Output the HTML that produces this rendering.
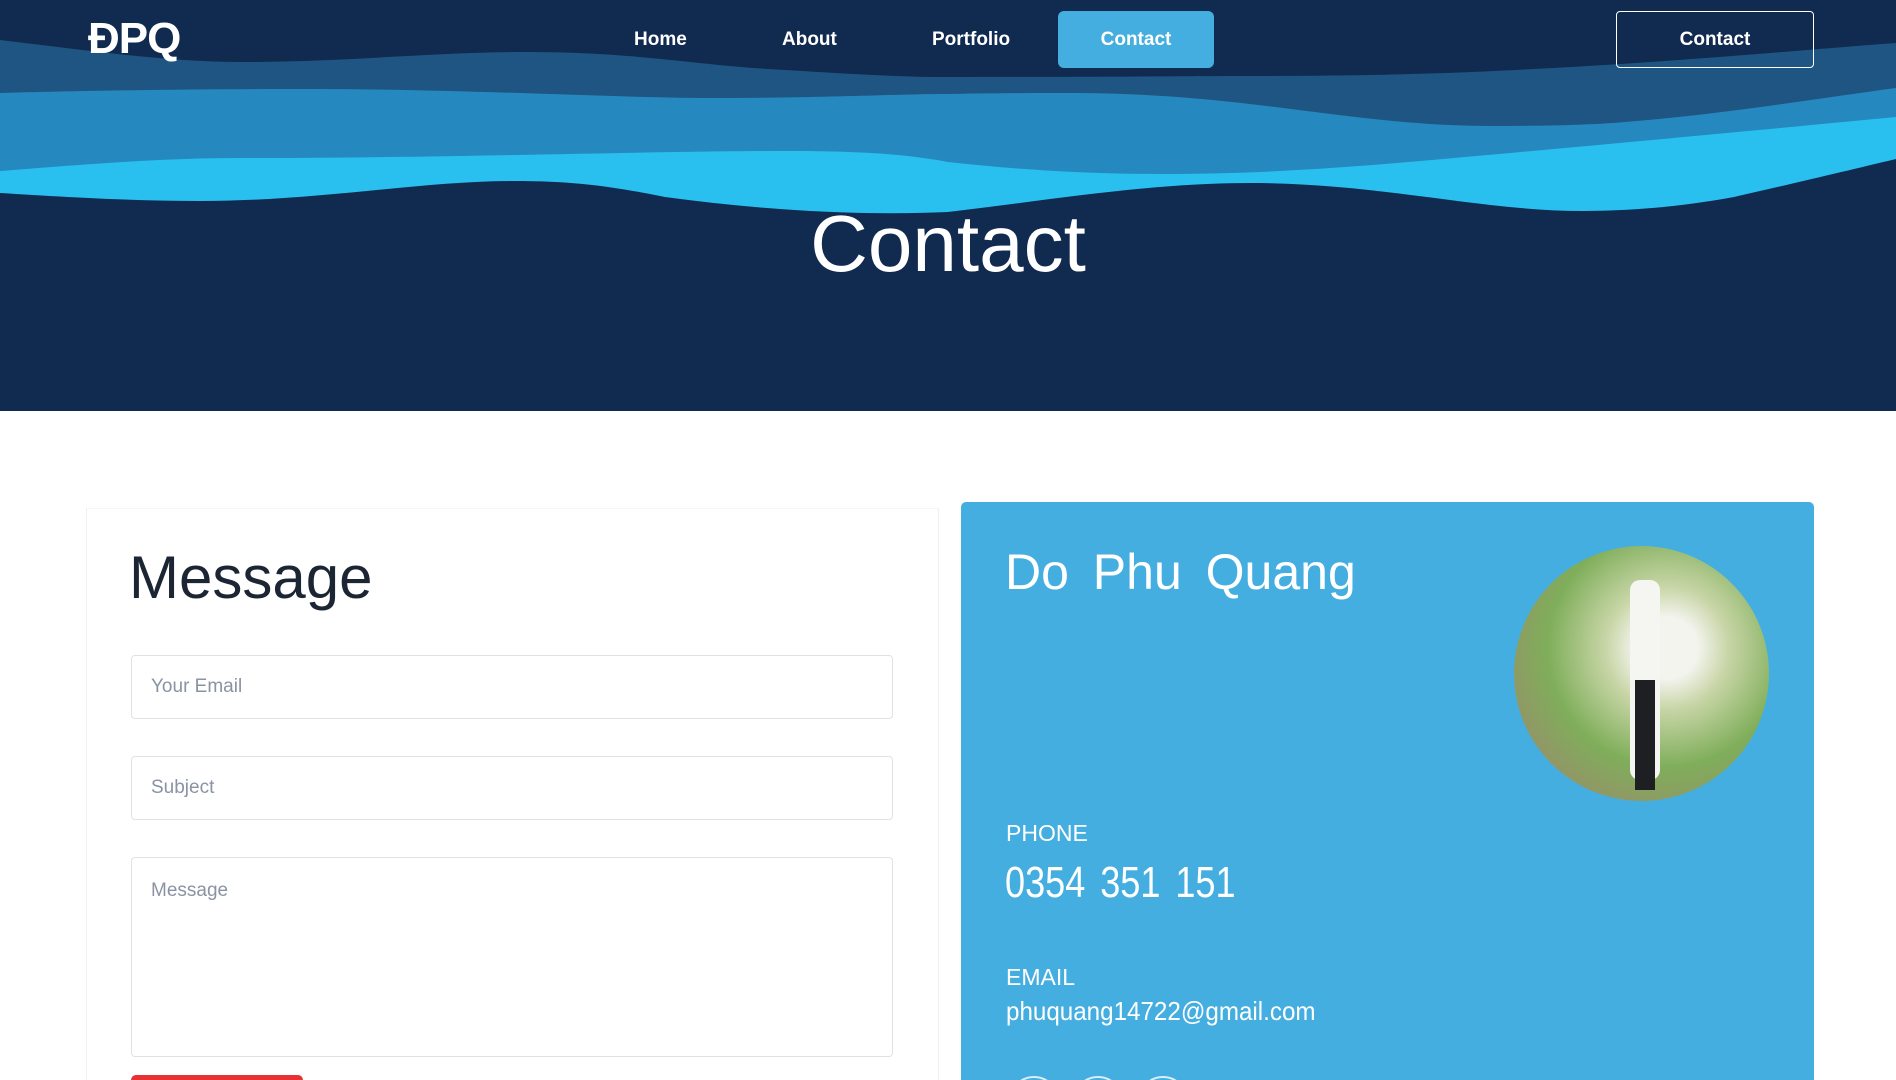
<!DOCTYPE html>
<html style="width:1896px;height:1080px;overflow:hidden"><head><meta charset="utf-8"><style>
*{margin:0;padding:0;box-sizing:border-box}
body{width:1896px;height:1080px;overflow:hidden;background:#fff;font-family:"Liberation Sans",sans-serif}
#wrap{position:relative;width:1896px;height:1080px;overflow:hidden}
.hero{position:absolute;left:0;top:0;width:1896px;height:411px;background:#112a4f;overflow:hidden}
.abs{position:absolute}
.nav{color:#fff;font-size:19px;font-weight:bold}
.input{position:absolute;left:131px;width:762px;border:1px solid #dfe2e6;border-radius:4px;color:#8a93a3;font-size:19px;padding-left:19px}
.circ{position:absolute;top:574px;width:50px;height:50px;border:2px solid #fff;border-radius:50%;opacity:.8}
</style></head><body><div id="wrap">
<div class="hero">
<svg class="abs" style="left:0;top:0" width="1896" height="411" viewBox="0 0 1896 411">
<path fill="#1f5583" d="M0,40 C100,52 170,62 242,62 C350,62 430,52 526,52 C640,52 700,66 786,70 C850,74 900,77 948,77 C1100,77 1200,76 1250,76 C1400,76 1480,72 1553,68 C1700,60 1800,50 1896,43 L1896,411 L0,411Z"/>
<path fill="#2589bf" d="M0,93 C120,90 200,89 302,89 C480,89 600,98 725,98 C820,98 900,94 948,94 C1000,93 1030,93 1069,93 C1250,93 1350,126 1492,126 C1550,126 1580,125 1613,123 C1720,115 1820,98 1896,88 L1896,411 L0,411Z"/>
<path fill="#29c0f0" d="M0,171 C100,163 170,158 242,158 C450,158 650,151 786,151 C870,151 910,155 948,162 C1020,170 1090,174 1160,174 C1260,174 1340,168 1432,160 C1600,145 1760,130 1896,117 L1896,411 L0,411Z"/>
<path fill="#112a4f" d="M0,193 C80,198 140,201 200,201 C320,201 420,181 514,181 C580,181 620,188 665,197 C760,210 860,216 948,212 C1050,200 1150,183 1250,183 C1380,183 1480,211 1583,211 C1640,211 1690,205 1734,197 C1800,182 1850,170 1896,159 L1896,411 L0,411Z"/>
</svg>
<div class="abs" style="left:88px;top:14px;color:#fff;font-size:44px;font-weight:bold;letter-spacing:-1px">ĐPQ</div>
<div class="abs nav" style="left:634px;top:29px">Home</div>
<div class="abs nav" style="left:782px;top:29px">About</div>
<div class="abs nav" style="left:932px;top:29px">Portfolio</div>
<div class="abs nav" style="left:1058px;top:11px;width:156px;height:57px;background:#45aee0;border-radius:6px;text-align:center;line-height:57px">Contact</div>
<div class="abs nav" style="left:1616px;top:11px;width:198px;height:57px;border:1px solid #fff;border-radius:4px;text-align:center;line-height:55px">Contact</div>
<div class="abs" style="left:0;width:1896px;top:199px;text-align:center;color:#fff;font-size:80px;line-height:90px">Contact</div>
</div>

<div class="abs" style="left:86px;top:508px;width:853px;height:572px;border-left:1px solid #f0f0f0;border-right:1px solid #f0f0f0;border-top:1px solid #f6f6f6"></div>
<div class="abs" style="left:129px;top:538px;font-size:60px;color:#1c2533;line-height:80px">Message</div>
<div class="input" style="top:655px;height:64px;line-height:62px">Your Email</div>
<div class="input" style="top:756px;height:64px;line-height:62px">Subject</div>
<div class="input" style="top:857px;height:200px;padding-top:22px">Message</div>
<div class="abs" style="left:131px;top:1075px;width:172px;height:5px;background:#e63232;border-radius:5px 5px 0 0"></div>

<div class="abs" style="left:961px;top:502px;width:853px;height:578px;background:#45aee0;border-radius:5px 5px 0 0;overflow:hidden">
<div class="circ" style="left:48px"></div>
<div class="circ" style="left:112px"></div>
<div class="circ" style="left:177px"></div>
</div>
<div class="abs" style="left:1005px;top:540px;color:#fff;font-size:50px;line-height:64px;word-spacing:10px">Do Phu Quang</div>
<div class="abs" style="left:1514px;top:546px;width:255px;height:255px;border-radius:50%;background:radial-gradient(ellipse at 60% 40%,#f4f4ef 0 14%,#c9d6a8 28%,#7fae5a 55%,#9a8c6c 85%)"></div>
<div class="abs" style="left:1630px;top:580px;width:30px;height:200px;background:#f5f5f2;border-radius:10px"></div>
<div class="abs" style="left:1635px;top:680px;width:20px;height:110px;background:#1d1f22"></div>
<div class="abs" style="left:1006px;top:820px;color:#fff;font-size:23px">PHONE</div>
<div class="abs" style="left:1005px;top:858px;color:#fff;font-size:44px;word-spacing:6px;transform:scaleX(0.82);transform-origin:left top">0354 351 151</div>
<div class="abs" style="left:1006px;top:964px;color:#fff;font-size:23px">EMAIL</div>
<div class="abs" style="left:1006px;top:996px;color:#fff;font-size:26px;transform:scaleX(0.93);transform-origin:left top">phuquang14722@gmail.com</div>
</div></body></html>
